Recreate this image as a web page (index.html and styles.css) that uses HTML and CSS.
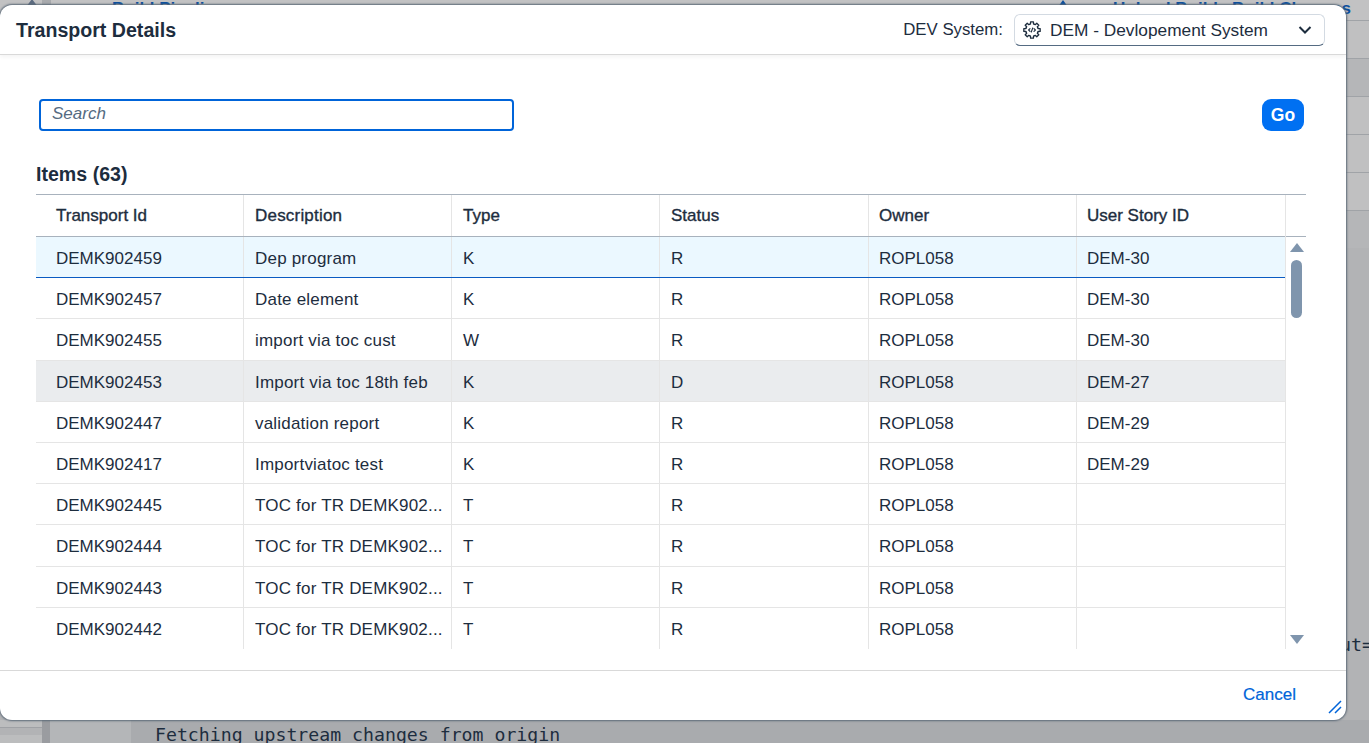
FILE: index.html
```html
<!DOCTYPE html>
<html>
<head>
    <title>Transport Details</title>
    <meta charset="UTF-8">
    <link rel="stylesheet" href="styles.css">
</head>

<body>
    <div class="backdrop">
        <div class="bgTop">
            <span class="bgTriangle"></span>
            <span class="bgBox"></span>
            <span class="bgLinkLeft">Build Pipeline</span>
            <span class="bgIcon"></span>
            <span class="bgLinkRight">Upload Build &nbsp; Build Changes</span>
        </div>
        <div class="bgStripes">
            <div class="stripe"></div>
            <div class="stripe dark"></div>
            <div class="stripe"></div>
            <div class="stripe"></div>
            <div class="stripe"></div>
            <div class="stripe dark"></div>
        </div>
        <div class="bgBottom">
            <div class="bgSide"></div>
            <div class="bgBar"></div>
            <div class="bgGutter"></div>
            <div class="bgLog">Fetching upstream changes from origin</div>
        </div>
        <div class="bgOut">ut=</div>
    </div>

    <div class="dialog">
        <header class="dialogHeader">
            <div class="dialogTitle">Transport Details</div>
            <div class="systemPick">
                <span class="systemLabel">DEV System:</span>
                <div class="systemSelect">
                    <svg class="gearIcon" width="18" height="18" viewBox="0 0 18 18" fill="none" stroke="#1d2d3e" stroke-width="1.3" stroke-linejoin="round" stroke-linecap="round">
                        <path id="cogTooth" d="M6.63 3.27 7.5 2.99 7.56.82h2.88l.06 2.17.87.28"/>
                        <use href="#cogTooth" transform="rotate(45 9 9)"/>
                        <use href="#cogTooth" transform="rotate(90 9 9)"/>
                        <use href="#cogTooth" transform="rotate(135 9 9)"/>
                        <use href="#cogTooth" transform="rotate(180 9 9)"/>
                        <use href="#cogTooth" transform="rotate(225 9 9)"/>
                        <use href="#cogTooth" transform="rotate(270 9 9)"/>
                        <use href="#cogTooth" transform="rotate(315 9 9)"/>
                        <path stroke-width="1.1" d="M7 7.6 5.6 9 7 10.4M11 7.6 12.4 9 11 10.4M9.7 7l-1.4 4"/>
                    </svg>
                    <span class="systemValue">DEM - Devlopement System</span>
                    <svg class="chevron" width="14" height="10" viewBox="0 0 14 10" fill="none" stroke="#1d2d3e" stroke-width="2">
                        <path d="M1.5 2 7 7.5 12.5 2"/>
                    </svg>
                </div>
            </div>
        </header>

        <div class="dialogBody">
            <div class="searchRow">
                <div class="searchBox">Search</div>
                <button class="goBtn">Go</button>
            </div>
            <div class="itemsTitle">Items (63)</div>

            <div class="tableWrap">
                <div class="tableMain">
                    <div class="row headRow">
                        <div class="cell">Transport Id</div>
                        <div class="cell">Description</div>
                        <div class="cell">Type</div>
                        <div class="cell">Status</div>
                        <div class="cell">Owner</div>
                        <div class="cell">User Story ID</div>
                    </div>
                    <div class="row selected">
                        <div class="cell">DEMK902459</div><div class="cell">Dep program</div><div class="cell">K</div><div class="cell">R</div><div class="cell">ROPL058</div><div class="cell">DEM-30</div>
                    </div>
                    <div class="row">
                        <div class="cell">DEMK902457</div><div class="cell">Date element</div><div class="cell">K</div><div class="cell">R</div><div class="cell">ROPL058</div><div class="cell">DEM-30</div>
                    </div>
                    <div class="row">
                        <div class="cell">DEMK902455</div><div class="cell">import via toc cust</div><div class="cell">W</div><div class="cell">R</div><div class="cell">ROPL058</div><div class="cell">DEM-30</div>
                    </div>
                    <div class="row hovered">
                        <div class="cell">DEMK902453</div><div class="cell">Import via toc 18th feb</div><div class="cell">K</div><div class="cell">D</div><div class="cell">ROPL058</div><div class="cell">DEM-27</div>
                    </div>
                    <div class="row">
                        <div class="cell">DEMK902447</div><div class="cell">validation report</div><div class="cell">K</div><div class="cell">R</div><div class="cell">ROPL058</div><div class="cell">DEM-29</div>
                    </div>
                    <div class="row">
                        <div class="cell">DEMK902417</div><div class="cell">Importviatoc test</div><div class="cell">K</div><div class="cell">R</div><div class="cell">ROPL058</div><div class="cell">DEM-29</div>
                    </div>
                    <div class="row">
                        <div class="cell">DEMK902445</div><div class="cell">TOC for TR DEMK902...</div><div class="cell">T</div><div class="cell">R</div><div class="cell">ROPL058</div><div class="cell"></div>
                    </div>
                    <div class="row">
                        <div class="cell">DEMK902444</div><div class="cell">TOC for TR DEMK902...</div><div class="cell">T</div><div class="cell">R</div><div class="cell">ROPL058</div><div class="cell"></div>
                    </div>
                    <div class="row">
                        <div class="cell">DEMK902443</div><div class="cell">TOC for TR DEMK902...</div><div class="cell">T</div><div class="cell">R</div><div class="cell">ROPL058</div><div class="cell"></div>
                    </div>
                    <div class="row lastRow">
                        <div class="cell">DEMK902442</div><div class="cell">TOC for TR DEMK902...</div><div class="cell">T</div><div class="cell">R</div><div class="cell">ROPL058</div><div class="cell"></div>
                    </div>
                </div>
                <div class="scrollCol">
                    <div class="scrollHead"></div>
                    <div class="scrollTrack">
                        <div class="arrowUp"></div>
                        <div class="thumb"></div>
                        <div class="arrowDown"></div>
                    </div>
                </div>
            </div>
        </div>

        <footer class="dialogFooter">
            <span class="cancelBtn">Cancel</span>
            <svg class="resizeGrip" width="14" height="14" viewBox="0 0 14 14" fill="none" stroke="#0064d9" stroke-width="1.5">
                <path d="M1 13 13 1M7 13 13 7"/>
            </svg>
        </footer>
    </div>
</body>

</html>
```
FILE: styles.css
```css
html, body {
    margin: 0;
    height: 100%;
    overflow: hidden;
}

body {
    font-family: "Liberation Sans", Arial, sans-serif;
    color: #1d2d3e;
}

.backdrop {
    position: absolute;
    top: 0;
    left: 0;
    right: 0;
    bottom: 0;
    background-color: #b2b3b5;
}

.bgTop {
    position: relative;
    height: 20px;
    background-color: #c2c2c3;
    overflow: hidden;
}

.bgTriangle {
    position: absolute;
    left: 26px;
    top: -1px;
    border-left: 6px solid transparent;
    border-right: 6px solid transparent;
    border-bottom: 8px solid #5b6b80;
}

.bgBox {
    position: absolute;
    left: 42px;
    top: 0;
    width: 9px;
    height: 10px;
    background-color: #a8aaad;
}

.bgLinkLeft, .bgLinkRight {
    position: absolute;
    top: -1px;
    font-size: 17px;
    line-height: 20px;
    font-weight: 700;
    color: #0a4f9e;
    white-space: nowrap;
}

.bgLinkLeft {
    left: 112px;
}

.bgLinkRight {
    right: 18px;
}

.bgIcon {
    position: absolute;
    left: 1058px;
    top: 0;
    border-left: 5px solid transparent;
    border-right: 5px solid transparent;
    border-bottom: 7px solid #0a4f9e;
}

.bgStripes {
    position: absolute;
    top: 20px;
    left: 0;
    right: 0;
}

.stripe {
    height: 37px;
    border-top: 1px solid #a0a3a7;
    background-color: #c0c0c1;
}

.dark {
    background-color: #b5b6b8;
}

.bgBottom {
    position: absolute;
    left: 0;
    right: 0;
    top: 720px;
    height: 23px;
    display: flex;
}

.bgSide {
    width: 42px;
    box-sizing: border-box;
    height: 8px;
    border-bottom: 1px solid #9fa1a5;
    background-color: #bcbdbe;
    box-shadow: 0 15px 0 #bcbdbe;
}

.bgBar {
    width: 8px;
    background-color: #9a9ca0;
}

.bgGutter {
    width: 81px;
    background-color: #b4b6b8;
}

.bgLog {
    flex: 1;
    padding-left: 24px;
    background-color: #a9abae;
    font-family: "DejaVu Sans Mono", monospace;
    font-size: 18.2px;
    line-height: 30px;
    color: #1d2d3e;
    overflow: hidden;
}

.bgOut {
    position: absolute;
    left: 1340px;
    top: 634px;
    font-family: "DejaVu Sans Mono", monospace;
    font-size: 18.2px;
    color: #1d2d3e;
    white-space: nowrap;
}

.dialog {
    position: absolute;
    top: 5px;
    left: 0;
    width: 1346px;
    height: 715px;
    display: flex;
    flex-direction: column;
    background-color: #fff;
    border-radius: 12px;
    box-shadow: 0 0 2px 1px #5d6a78;
}

.dialogHeader {
    height: 49px;
    flex: none;
    display: flex;
    align-items: center;
    justify-content: space-between;
    padding: 0 21px 0 16px;
    border-bottom: 1px solid #d9d9d9;
    box-shadow: 0 2px 4px rgba(0, 0, 0, 0.05);
}

.dialogTitle {
    padding-top: 1px;
    font-size: 19.6px;
    font-weight: 700;
}

.systemPick {
    display: flex;
    align-items: center;
    gap: 11px;
}

.systemLabel {
    padding-top: 1px;
    font-size: 16.8px;
}

.systemSelect {
    width: 311px;
    height: 32px;
    box-sizing: border-box;
    display: flex;
    align-items: center;
    gap: 9px;
    padding: 0 12px 0 8px;
    border: 1px solid #d3dae2;
    border-bottom-color: #556b82;
    border-radius: 6px;
    font-size: 17.3px;
}

.gearIcon {
    flex: none;
}

.systemValue {
    flex: 1;
    padding-top: 1px;
}

.dialogBody {
    flex: 1;
    padding: 44px 40px 0 36px;
    min-height: 0;
}

.searchRow {
    display: flex;
    justify-content: space-between;
    height: 32px;
    padding: 0 2px 0 3px;
}

.searchBox {
    width: 475px;
    height: 32px;
    box-sizing: border-box;
    padding-left: 11px;
    border: 2px solid #0064d9;
    border-radius: 4px;
    font-size: 17px;
    font-style: italic;
    line-height: 26.5px;
    color: #556b82;
}

.goBtn {
    width: 42px;
    height: 32px;
    padding: 0;
    border: none;
    border-radius: 9px;
    background-color: #0070f2;
    color: #fff;
    font-family: inherit;
    font-size: 17.5px;
    font-weight: 700;
}

.itemsTitle {
    margin-top: 32px;
    height: 31px;
    font-size: 19.6px;
    font-weight: 700;
    line-height: 22px;
}

.tableWrap {
    display: flex;
    border-top: 1px solid #a8b2bd;
}

.tableMain {
    width: 1249px;
}

.row {
    display: grid;
    grid-template-columns: 208px 208px 208px 209px 208px 208px;
    height: 41.2px;
    box-sizing: border-box;
    border-bottom: 1px solid #e5e5e5;
    font-size: 17px;
    line-height: 43.5px;
}

.cell {
    padding: 0 10px 0 20px;
    border-right: 1px solid #e5e5e5;
    white-space: nowrap;
    overflow: hidden;
}

.cell + .cell {
    padding-left: 11px;
}

.cell:nth-child(2) {
    letter-spacing: 0.2px;
}

.cell:nth-child(5), .cell:nth-child(6) {
    padding-left: 10px;
}

.cell:last-child {
    border-right: none;
}

.headRow {
    height: 42px;
    border-bottom: 1px solid #a8b2bd;
    line-height: 41px;
    -webkit-text-stroke: 0.35px #1d2d3e;
}

.selected {
    background-color: #ebf8ff;
    border-bottom: 1px solid #0a5bc2;
}

.hovered {
    background-color: #eaecee;
}

.lastRow {
    border-bottom: none;
}

.scrollCol {
    width: 21px;
    border-left: 1px solid #e5e5e5;
}

.scrollHead {
    height: 41px;
    border-bottom: 1px solid #a8b2bd;
}

.scrollTrack {
    position: relative;
    height: 412px;
}

.thumb {
    position: absolute;
    left: 5px;
    top: 23px;
    width: 11px;
    height: 58px;
    border-radius: 6px;
    background-color: #7f95ad;
}

.arrowUp, .arrowDown {
    position: absolute;
    left: 4px;
    width: 0;
    height: 0;
    border-left: 7px solid transparent;
    border-right: 7px solid transparent;
}

.arrowUp {
    top: 6px;
    border-bottom: 9px solid #7f95ad;
}

.arrowDown {
    top: 398px;
    border-top: 9px solid #7f95ad;
}

.dialogFooter {
    position: relative;
    height: 50px;
    flex: none;
    display: flex;
    align-items: center;
    justify-content: flex-end;
    padding: 0 50px 1px 0;
    box-sizing: border-box;
    margin-top: auto;
    border-top: 1px solid #d9d9d9;
}

.cancelBtn {
    font-size: 17px;
    font-weight: 400;
    color: #0064d9;
    -webkit-text-stroke: 0.2px #0064d9;
}

.resizeGrip {
    position: absolute;
    right: 4px;
    bottom: 6px;
}
```
